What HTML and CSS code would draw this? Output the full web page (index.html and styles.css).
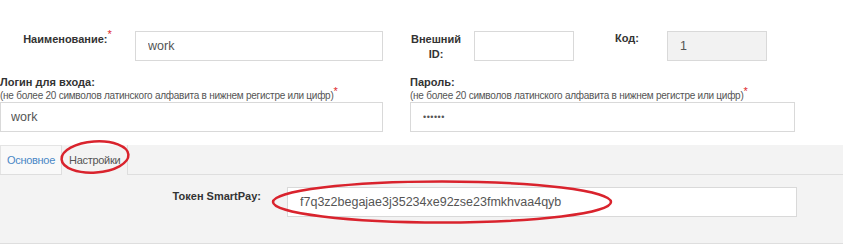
FILE: index.html
```html
<!DOCTYPE html>
<html lang="ru">
<head>
  <meta charset="UTF-8">
  <title>Пользователь</title>
  <link rel="stylesheet" href="styles.css">
</head>
<body>
  <div class="page">
    <div class="form">
      <div class="row row-main">
        <label class="lbl lbl-name">Наименование:<span class="req">*</span></label>
        <input class="field field-name" type="text" value="work">
        <label class="lbl lbl-ext">Внешний<br>ID:</label>
        <input class="field field-ext" type="text" value="">
        <label class="lbl lbl-code">Код:</label>
        <input class="field field-code" type="text" value="1" disabled>
      </div>

      <div class="row row-auth">
        <div class="auth-col">
          <div class="lbl">Логин для входа:</div>
          <div class="hint">(не более 20 символов латинского алфавита в нижнем регистре или цифр)<span class="req">*</span></div>
          <input class="field field-wide" type="text" value="work">
        </div>
        <div class="auth-col auth-col-pass">
          <div class="lbl">Пароль:</div>
          <div class="hint">(не более 20 символов латинского алфавита в нижнем регистре или цифр)<span class="req">*</span></div>
          <input class="field field-wide field-pass" type="password" value="secret">
        </div>
      </div>
    </div>

    <div class="tabs">
      <div class="tab-bar">
        <a class="tab">Основное</a>
        <a class="tab active">Настройки</a>
      </div>
      <div class="tab-body">
        <div class="token-row">
          <label class="lbl lbl-token">Токен SmartPay:</label>
          <input class="field field-token" type="text" value="f7q3z2begajae3j35234xe92zse23fmkhvaa4qyb">
        </div>
      </div>
    </div>

    <!-- hand-drawn marks over the screenshot -->
    <svg class="marks" width="843" height="244" viewBox="0 0 843 244">
      <ellipse cx="95" cy="157" rx="33.5" ry="15.5" transform="rotate(-4 95 157)" />
      <ellipse cx="442" cy="202" rx="169" ry="20.5" />
    </svg>
  </div>
</body>
</html>
```

FILE: styles.css
```css
:root {
  --text: #333;
  --muted: #555;
  --border: #d9d9d9;
  --panel: #f3f3f3;
  --red: #d9232d;
}

body {
  margin: 0;
  font-family: "Liberation Sans", Arial, sans-serif;
  color: var(--text);
  background: #fff;
}

.page {
  position: relative;
  width: 843px;
  height: 244px;
  overflow: hidden;
}

.form {
  padding-top: 31px;
}

.row {
  display: flex;
  align-items: flex-start;
}

.lbl {
  font-size: 11px;
  font-weight: bold;
  line-height: 15px;
  color: var(--text);
}

.req {
  color: #e0282f;
  font-size: 11px;
  line-height: 0;
  position: relative;
  top: -5px;
  font-weight: normal;
}

.field {
  box-sizing: border-box;
  height: 30px;
  padding: 0 10px;
  border: 1px solid var(--border);
  background: #fff;
  font-family: "Liberation Sans", Arial, sans-serif;
  font-size: 12.5px;
  color: var(--muted);
  outline: none;
}

.lbl-name {
  width: 135px;
  padding-top: 1px;
  text-align: center;
}

.field-name {
  width: 248px;
  padding-left: 12px;
}

.lbl-ext {
  width: 52px;
  margin-left: 27px;
  padding-top: 1px;
  text-align: center;
}

.field-ext {
  width: 100px;
  margin-left: 12px;
}

.lbl-code {
  width: 52px;
  padding-left: 41px;
}

.field-code {
  width: 100px;
  padding-left: 12px;
  background: #f2f2f2;
  color: var(--muted);
}

.row-auth {
  margin-top: 13px;
  gap: 27px;
}

.auth-col {
  width: 383px;
}

.auth-col-pass {
  width: 385px;
}

.hint {
  height: 12px;
  font-size: 10px;
  line-height: 12px;
  letter-spacing: -0.25px;
  white-space: nowrap;
  color: var(--muted);
}

.hint .req {
  top: -4px;
  letter-spacing: 0;
}

.field-wide {
  width: 100%;
}

.field-pass {
  padding-left: 12px;
  font-size: 9px;
  letter-spacing: 0.5px;
}

.tabs {
  margin-top: 13px;
  background: var(--panel);
  border-bottom: 1px solid #dedede;
}

.tab-bar {
  display: flex;
  height: 29px;
  border-bottom: 1px solid #dedede;
}

.tab {
  display: flex;
  align-items: center;
  padding: 0 6px;
  font-size: 11px;
  letter-spacing: -0.3px;
  color: var(--muted);
  border-right: 1px solid #dedede;
  cursor: pointer;
}

.tab:first-child {
  color: #4a87c6;
  background: #f9f9f9;
  border-left: 1px solid #e4e4e4;
  border-top: 1px solid #e4e4e4;
}

.tab.active {
  background: var(--panel);
  margin-bottom: -1px;
  padding: 0 7px;
}

.tab-body {
  padding: 12px 0 26px;
}

.token-row {
  display: flex;
  align-items: flex-start;
}

.lbl-token {
  width: 261px;
  padding-top: 2px;
  text-align: right;
}

.field-token {
  width: 510px;
  margin-left: 26px;
  padding-left: 12px;
}

.marks {
  position: absolute;
  left: 0;
  top: 0;
  pointer-events: none;
}

.marks ellipse {
  fill: none;
  stroke: var(--red);
  stroke-width: 2.5;
}
```
